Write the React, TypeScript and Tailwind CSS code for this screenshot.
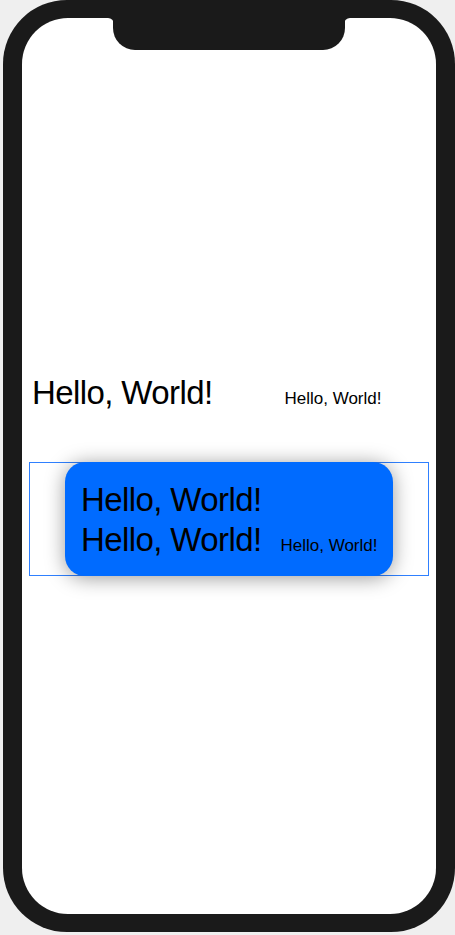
import React from "react";

const font = { fontFamily: '"Liberation Sans", Arial, sans-serif' };

export default function App() {
  return (
    <div className="w-[455px] h-[935px] bg-[#efefef] overflow-hidden" style={font}>
      <div className="ml-[3px] w-[452px] h-[932px] rounded-[64px] bg-[#1a1a1a] px-[19px] py-[18px]">
        <div className="relative w-[414px] h-[896px] rounded-[46px] bg-white overflow-hidden">
          {/* notch */}
          <div className="absolute left-[91px] top-0 w-[232px] h-[32px] bg-[#1a1a1a] rounded-b-[22px]" />
          <svg className="absolute left-[86px] top-0" width="6" height="6" viewBox="0 0 6 6">
            <path d="M0 0 H6 V6 A6 6 0 0 0 0 0 Z" fill="#1a1a1a" />
          </svg>
          <svg className="absolute left-[322px] top-0" width="6" height="6" viewBox="0 0 6 6">
            <path d="M6 0 H0 V6 A6 6 0 0 1 6 0 Z" fill="#1a1a1a" />
          </svg>

          <div className="flex flex-col pt-[355px]">
            <div className="flex items-baseline pl-[10px]">
              <span className="text-[33px] leading-[40px] tracking-[-0.6px] text-black">Hello, World!</span>
              <span className="ml-[72px] text-[17px] leading-[20px] text-black">Hello, World!</span>
            </div>
            <div className="mt-[49px] mx-auto w-[400px] h-[114px] border border-[#2f80ff] flex justify-center">
              <div className="-my-px w-[328px] h-[114px] rounded-[20px] bg-[#006bff] shadow-[0_2px_20px_rgba(0,0,0,0.4)] pl-[16px] pt-[18px] flex flex-col">
                <span className="text-[33px] leading-[40px] tracking-[-0.6px] text-black">Hello, World!</span>
                <div className="flex items-baseline">
                  <span className="text-[33px] leading-[40px] tracking-[-0.6px] text-black">Hello, World!</span>
                  <span className="ml-[19px] text-[17px] leading-[20px] text-black">Hello, World!</span>
                </div>
              </div>
            </div>
          </div>
        </div>
      </div>
    </div>
  );
}
